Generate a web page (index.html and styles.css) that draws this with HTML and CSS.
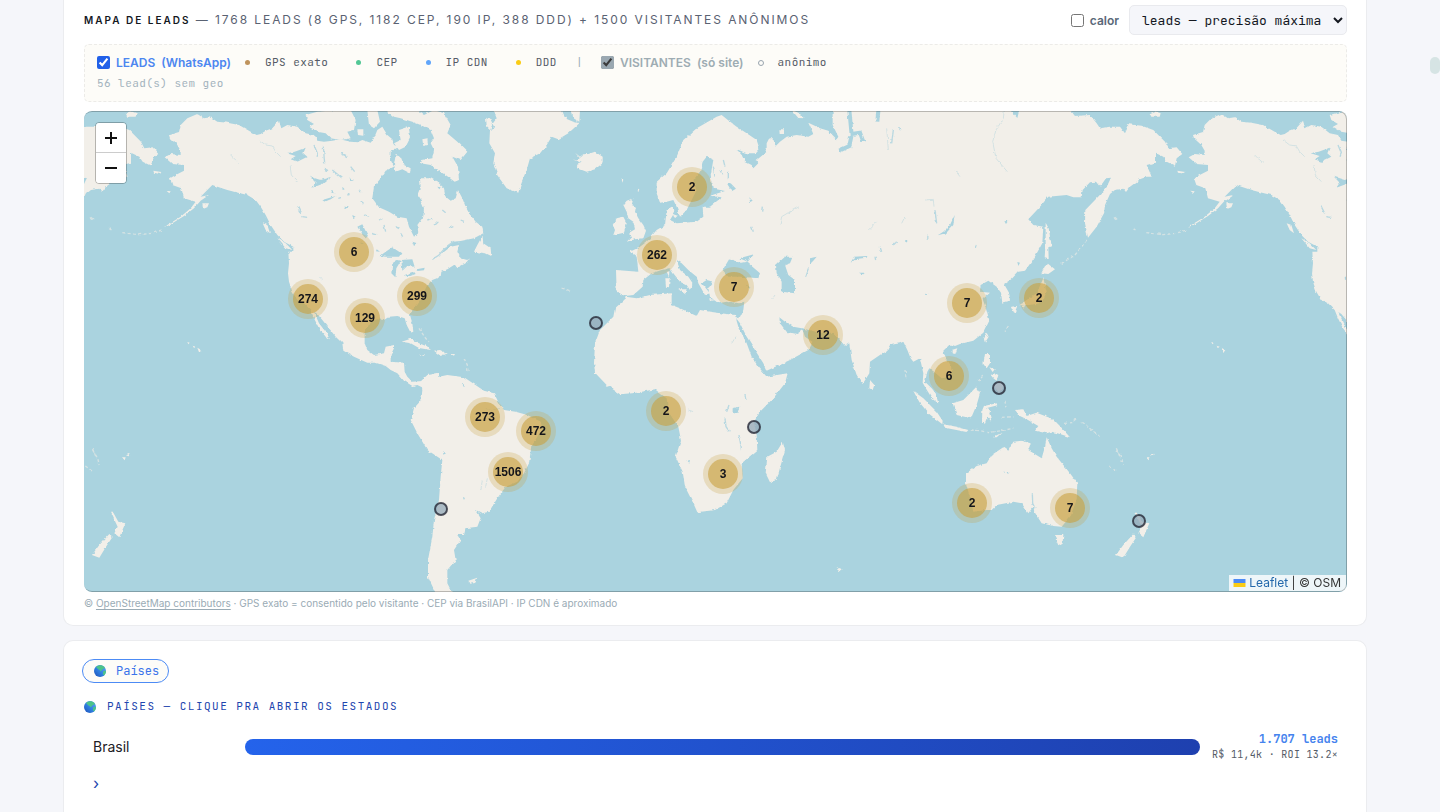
FILE: index.html
```html
<!DOCTYPE html>
<html lang="pt-BR">
<head>
<meta charset="utf-8">
<meta name="viewport" content="width=device-width, initial-scale=1">
<title>Mapa de leads</title>
<link rel="stylesheet" href="styles.css">
</head>
<body>
<main class="page">
  <section class="card card-map">
    <header class="map-head">
      <h2 class="map-title"><strong>MAPA DE LEADS</strong> — 1768 LEADS (8 GPS, 1182 CEP, 190 IP, 388 DDD) + 1500 VISITANTES ANÔNIMOS</h2>
      <div class="map-tools">
        <label class="heat"><input type="checkbox"> calor</label>
        <select class="mode" aria-label="Modo do mapa"><option>leads — precisão máxima</option></select>
      </div>
    </header>

    <div class="filters">
      <div class="filter-row">
        <label class="toggle toggle-leads"><input type="checkbox" checked> LEADS&nbsp; (WhatsApp)</label>
        <span class="key"><i class="dot dot-gps"></i>GPS exato</span>
        <span class="key"><i class="dot dot-cep"></i>CEP</span>
        <span class="key"><i class="dot dot-ip"></i>IP CDN</span>
        <span class="key"><i class="dot dot-ddd"></i>DDD</span>
        <span class="divider">|</span>
        <label class="toggle toggle-visitors"><input type="checkbox" checked> VISITANTES&nbsp; (só site)</label>
        <span class="key key-anon"><i class="ring"></i>anônimo</span>
      </div>
      <div class="no-geo">56 lead(s) sem geo</div>
    </div>

    <div class="map">
      <svg class="map-canvas" viewBox="0 0 1263 481" preserveAspectRatio="xMidYMid slice" role="img" aria-label="Mapa-múndi de leads">
        <defs>
          <filter id="coast" x="0" y="0" width="1263" height="481" filterUnits="userSpaceOnUse" color-interpolation-filters="sRGB">
            <feTurbulence type="fractalNoise" baseFrequency=".2" numOctaves="3" seed="4" result="n"/>
            <feDisplacementMap in="SourceGraphic" in2="n" scale="3" xChannelSelector="R" yChannelSelector="G"/>
          </filter>
          <g id="cluster"><circle class="halo" r="20"/><circle class="core" r="15"/></g>
          <circle id="pin" class="pin" r="6"/>
          <g id="world">
            <g transform="translate(0 -1) scale(.33333)">
              <g class="land">
                <path d="M255 75 285 66 290 45 310 25 340 12 360 25 380 22 400 35 430 38 465 45 500 65 518 75 530 72 545 62 565 55 585 32 592 55 610 45 640 50 665 70 690 75 700 92 720 95 745 92 770 88 800 95 820 97 835 90 860 98 870 85 880 60 895 50 910 75 925 88 930 105 945 110 920 125 920 150 930 170 905 182 890 205 870 230 865 265 885 292 915 305 940 320 968 325 975 350 990 380 1003 370 1000 345 1018 320 1020 295 1010 270 1000 255 1010 230 1008 205 1040 205 1060 215 1080 235 1085 260 1100 272 1115 265 1122 240 1135 265 1145 290 1155 310 1175 335 1195 350 1198 370 1170 385 1130 393 1105 395 1080 415 1075 430 1100 410 1125 405 1120 425 1130 445 1150 450 1160 440 1145 460 1118 475 1110 465 1090 478 1072 485 1070 500 1045 510 1030 525 1020 545 1010 570 1000 585 985 600 978 615 985 640 988 665 980 668 968 645 962 625 940 618 915 620 900 630 880 628 860 635 842 665 842 700 850 720 870 735 900 730 905 710 930 705 930 715 920 735 920 755 960 758 962 785 970 800 985 815 1015 813 1020 835 1000 825 985 828 960 812 940 790 920 780 905 768 875 758 850 758 810 740 778 722 775 700 755 680 735 655 715 630 700 612 690 605 705 640 725 665 738 688 725 680 705 655 690 625 680 600 660 580 640 570 625 545 615 515 612 490 615 460 613 425 628 425 628 410 600 395 580 375 560 345 545 315 530 290 515 270 490 255 450 245 430 240 400 230 385 225 370 240 350 260 375 255 350 272 330 295 300 318 265 340 240 355 250 345 290 320 320 295 335 275 300 265 292 235 265 225 258 205 275 195 300 182 300 165 265 162 242 142 260 132 290 135 290 122 280 105 258 85Z"/>
                <path d="M665 15 700 5 755 0 800 0 815 30 810 60 790 65 800 85 770 90 740 85 725 70 700 65 675 50 690 42 670 30ZM850 0 880 0 888 35 870 55 855 45ZM820 58 838 58 838 77 822 75Z"/>
                <path d="M905 0 1000 0 1020 15 1050 0 1080 10 1100 45 1090 70 1120 95 1150 125 1130 150 1105 140 1122 170 1125 210 1112 215 1085 195 1060 180 1040 165 1010 160 1015 150 1045 145 1050 120 1040 100 1050 85 1040 60 1010 45 985 35 950 25 930 20ZM935 135 950 140 960 165 980 175 978 190 955 178 935 185 930 165ZM945 60 975 50 978 85 965 110 945 120 930 100 950 90ZM1015 88 1030 85 1032 105 1018 108Z"/>
                <path d="M1195 378 1198 400 1220 415 1222 438 1205 430 1170 425 1180 405ZM580 385 605 400 625 420 605 415ZM536 340 550 345 558 370 545 360ZM355 280 375 280 370 292 357 297ZM125 10 140 4 158 10 155 20 130 20ZM208 182 232 186 228 192 210 188ZM247 242 260 244 256 250Z"/>
                <path d="M953 695 980 686 1005 700 1035 712 1040 720 1005 714 980 700ZM1050 722 1068 720 1088 730 1070 738ZM1005 732 1022 732 1020 738ZM1100 732 1113 732 1110 737Z"/>
                <path d="M1012 812 1030 795 1065 788 1065 800 1090 795 1140 802 1160 815 1200 842 1230 850 1245 880 1260 900 1295 905 1330 915 1370 935 1375 955 1342 1010 1335 1060 1320 1090 1300 1115 1265 1130 1240 1165 1215 1205 1195 1210 1175 1200 1190 1225 1180 1250 1145 1255 1140 1275 1120 1275 1130 1290 1110 1320 1115 1350 1090 1380 1090 1420 1105 1450 1055 1450 1032 1400 1032 1350 1045 1280 1050 1230 1065 1170 1070 1100 1075 1050 1030 1020 1000 970 980 930 990 895 1012 870 1015 840Z"/>
                <path d="M1153 1412 1180 1403 1174 1415 1158 1418ZM340 713 352 720 346 729ZM326 707 335 710 330 714ZM310 696 317 698 313 703ZM114 1042 125 1042 122 1051ZM126 1036 137 1031 134 1039Z"/>
              </g>
              <g class="isles"><path d="M18 322 24 330M75 355 85 362M115 368 165 374 205 370 240 358M1005 655 1015 670 1025 685 1035 695M1140 745 1150 765 1152 785M25 1015 38 1045"/></g>
              <g class="water">
                <path d="M888 438 905 425 925 412 952 430 945 440 905 440ZM925 460 940 450 950 453 937 475 934 502 922 490ZM952 450 985 448 992 470 970 468 955 482ZM960 496 990 485 995 492 970 501ZM998 478 1022 473 1020 481 1000 483ZM820 350 835 343 852 378 845 385 832 370ZM608 130 632 125 665 113 658 130 670 140 640 155 620 148 635 138ZM678 200 710 210 742 200 715 222 685 233 695 218ZM715 270 755 258 740 268 722 275ZM1060 230 1070 232 1066 238ZM745 240 752 250 742 248ZM800 205 810 210 802 214ZM780 290 795 292 785 298ZM805 315 815 320 807 324ZM775 230 782 238 776 240ZM985 395 1000 400 990 408ZM878 418 888 425 876 424ZM710 500 716 508 711 510ZM1136 824 1140 822 1140 832ZM1077 1024 1086 1030 1078 1034ZM1137 1163 1143 1163 1140 1170Z"/>
                <path class="stream" d="M1110 394 1085 412 1065 435 1045 448M690 105 700 130 696 140M718 110 722 160M745 180 775 205M840 315 855 322M865 370 880 375M900 345 905 365M1030 330 1045 325M1050 345 1060 335M640 290 650 310M655 320 670 322M770 130 790 140M800 170 812 185M830 395 838 400M720 175 732 182M760 265 770 262M825 240 832 246M830 275 838 282M790 255 800 252M1075 300 1085 308M1095 355 1108 350M1130 330 1140 334M885 330 895 326M935 350 945 356M950 370 956 380"/>
                <path class="river" d="M525 90 545 105 565 108 575 125 590 140M618 165 622 195 640 215M440 135 455 150 468 160M1245 895 1225 900 1205 895M1195 1115 1190 1140M1210 1105 1205 1130"/>
              </g>
            </g>
            <g transform="translate(396 -1) scale(.33333)">
              <g class="land">
                <path d="M40 0 50 25 35 45 30 60 28 100 45 130 40 160 55 200 80 235 115 248 125 215 140 180 150 145 180 130 200 105 215 80 235 88 265 70 298 40 280 35 262 28 252 15 245 0ZM18 20 30 25 42 50 35 62 20 48ZM275 0 300 0 298 35 280 25Z"/>
                <path d="M285 128 300 140 310 133 325 132 345 125 368 140 368 160 345 178 320 185 300 178 290 165 305 158 282 150 300 145ZM440 272 460 265 455 285 468 290 465 305 475 325 490 345 498 362 490 385 465 388 440 395 455 380 445 370 465 358 460 335 445 325 440 305 430 285ZM410 325 430 320 440 340 432 368 400 375 405 360 398 345ZM425 207 430 209 427 218ZM473 236 478 238 474 248Z"/>
                <path d="M710 20 725 15 750 35 770 50 800 70 830 90 838 115 825 130 800 130 770 118 785 135 795 155 815 165 820 175 835 160 830 150 860 125 860 100 870 80 885 95 885 110 900 95 920 80 950 75 985 80 1000 72 985 38 1020 55 1045 62 1070 88 1075 80 1058 45 1058 0 1590 0 1612 24 1618 0 1640 0 1770 0 1785 18 1830 15 1850 40 1860 55 1890 50 1920 50 1935 70 1945 48 1940 42 1985 47 2020 60 2055 95 2065 115 2090 112 2107 132 2090 145 2085 167 2060 155 2050 140 2025 128 2025 158 2000 165 2015 200 2000 200 1980 208 1950 230 1938 246 1930 236 1905 240 1890 252 1875 285 1872 310 1850 350 1824 383 1815 340 1816 300 1845 270 1878 235 1893 203 1878 205 1860 230 1848 215 1830 217 1808 240 1805 262 1780 262 1760 255 1705 260 1680 290 1645 328 1660 345 1690 350 1687 400 1662 445 1635 482 1615 485 1595 507 1572 522 1588 550 1590 572 1567 578 1563 548 1550 530 1525 512 1502 525 1500 545 1530 548 1508 568 1520 600 1528 632 1510 668 1480 692 1440 702 1425 708 1410 703 1390 722 1398 745 1418 775 1412 800 1385 805 1362 785 1348 775 1342 785 1335 815 1355 835 1367 850 1375 880 1358 868 1342 842 1328 818 1330 790 1320 745 1300 755 1292 745 1282 720 1270 695 1260 700 1230 705 1222 720 1170 755 1168 790 1148 822 1130 795 1115 750 1108 700 1095 708 1080 690 1060 668 1020 668 965 655 940 650 915 635 898 622 900 640 920 665 950 672 968 660 975 680 997 695 985 720 930 750 860 782 850 760 825 720 800 680 780 640 765 620 778 625 790 600 793 575 770 582 740 575 715 580 690 560 685 535 700 515 680 510 665 520 690 550 675 555 655 520 650 500 625 480 605 460 590 450 600 480 625 500 638 520 630 540 620 525 600 515 580 490 570 475 545 480 515 490 490 510 488 530 460 555 435 558 410 545 408 480 475 485 470 440 450 425 478 412 500 395 530 360 555 345 560 300 575 290 585 305 570 330 590 340 650 335 670 320 668 290 690 290 725 262 690 257 735 243 710 238 695 225 692 195 700 150 680 140 668 155 660 185 640 210 650 240 630 280 620 300 600 320 590 290 580 270 560 275 540 278 530 250 530 215 560 190 590 140 610 90 650 55Z"/>
                <path d="M437 560 470 565 510 555 575 550 575 585 600 595 650 618 660 600 690 605 740 612 765 615 775 650 800 700 815 740 835 770 860 800 923 790 915 820 880 865 840 905 822 935 830 975 832 1020 785 1060 788 1105 760 1140 740 1180 705 1200 652 1207 640 1180 615 1130 608 1085 587 1040 603 990 595 950 565 905 560 865 540 850 525 838 470 848 420 853 380 825 345 788 342 760 345 700 360 660 400 620 405 595 435 568ZM908 995 915 1020 890 1110 870 1117 857 1090 862 1040 890 1025Z"/>
                <path d="M595 538 620 538 615 552ZM556 505 569 505 567 532 558 530ZM560 485 568 484 567 500ZM688 567 708 570 690 573ZM578 312 595 318 585 328ZM935 0 955 8 975 25 955 24ZM898 58 912 58 912 72 899 72ZM1170 810 1183 825 1178 840 1168 835Z"/>
                <path d="M1697 338 1706 355 1715 408 1705 412 1706 445 1694 442 1697 400ZM1700 458 1725 478 1705 492 1684 490ZM1690 505 1700 545 1685 578 1650 585 1618 586 1640 570 1670 550ZM1594 590 1612 588 1603 610ZM1622 588 1636 585 1630 596ZM1520 668 1526 680 1515 698 1511 685ZM1415 720 1432 715 1426 732 1415 730Z"/>
                <path d="M1515 732 1530 732 1530 760 1520 775 1510 762ZM1528 772 1544 778 1538 786ZM1532 795 1545 790 1555 795 1550 812 1540 805ZM1540 830 1560 812 1572 830 1560 848 1545 838ZM1488 832 1500 850 1490 885 1473 925 1430 915 1418 880 1450 870ZM1300 843 1330 865 1370 905 1388 932 1387 943 1345 910 1318 876ZM1390 943 1430 950 1465 960 1460 966 1395 953ZM1507 900 1512 888 1550 880 1552 886 1518 895 1532 902 1528 910 1535 935 1522 920 1515 938 1506 935ZM1538 982 1565 968 1550 982Z"/>
                <path d="M1605 900 1630 898 1640 918 1670 908 1720 928 1742 950 1770 982 1740 972 1715 965 1700 970 1665 962 1675 948 1640 928 1620 918ZM1458 1090 1490 1068 1520 1060 1535 1035 1570 1012 1585 1022 1600 995 1625 992 1652 1000 1645 1020 1685 1045 1695 1010 1700 982 1715 1015 1730 1040 1770 1090 1792 1120 1790 1170 1770 1220 1745 1250 1720 1248 1685 1240 1663 1205 1660 1190 1645 1210 1625 1180 1600 1175 1550 1185 1535 1200 1520 1200 1480 1205 1475 1180 1458 1120ZM1722 1275 1750 1275 1748 1298 1735 1306Z"/>
                <path d="M1965 1208 1972 1208 1987 1235 2008 1240 1990 1282 1975 1270 1985 1250ZM1960 1272 1970 1280 1950 1310 1930 1343 1908 1335 1930 1305ZM1070 1372 1088 1378 1078 1386Z"/>
              </g>
              <g class="isles"><path d="M1752 940 1776 938 1788 926M1472 960 1500 962 1525 968 1565 962 1600 955M1888 1068 1912 1086M1910 1020 1925 1045 1930 1065M1805 935 1835 960 1865 982M1575 872 1578 895M1565 922 1600 920M1820 390 1805 410 1785 435 1745 460M1585 648 1575 665M1495 815 1508 795M1275 780 1278 805M245 534 270 542M1905 322 1915 332"/></g>
              <g class="water">
                <path d="M750 443 775 460 800 455 840 490 835 505 780 500 745 500 728 480ZM778 445 822 433 803 455ZM888 465 915 440 938 440 930 460 915 465 925 495 945 510 945 550 905 545 905 515 890 490ZM990 445 1010 440 1000 452 990 462ZM1424 315 1420 345 1398 370 1373 376 1390 365 1410 345ZM1112 458 1122 440 1162 438 1160 443 1128 447ZM1137 488 1155 488 1148 494ZM742 222 752 220 768 236 755 244ZM808 262 818 272 810 276ZM758 895 778 890 772 912 758 908ZM1570 1085 1574 1085 1574 1089ZM1583 1086 1588 1086 1586 1092ZM622 1052 630 1050 628 1058ZM1338 548 1345 550 1340 556ZM1275 390 1282 390 1280 398ZM1342 376 1346 380 1342 390ZM1485 408 1490 404 1488 414ZM1612 456 1620 458 1615 468ZM1573 334 1585 332 1578 342ZM788 128 806 150 800 155Z"/>
                <path class="gulf" d="M1108 0 1115 75 1108 108 1078 122M1115 72 1140 68 1150 95M1195 0 1192 35"/>
                <path class="stream" d="M735 925 738 950 748 964M777 975 785 1020M747 885 740 905M795 852 798 870M700 170 705 200M720 180 728 195M730 150 735 170M745 185 745 205M1657 1150 1658 1180 1665 1195M985 475 977 500M1185 440 1187 450M1200 410 1205 425M1250 395 1240 405M850 290 848 305M815 350 820 365M1365 300 1370 340M1240 60 1235 100M1255 55 1265 60M800 525 810 535"/>
                <path class="river" d="M1573 0 1570 25 1548 60 1538 95 1548 145 1582 185M1220 55 1225 120M1335 270 1360 268 1362 290M1425 180 1440 200M900 345 905 320 930 305 958 290M1265 340 1275 320M625 900 640 905M885 555 875 570M1165 360 1190 335M755 700 768 680"/>
              </g>
            </g>
          </g>
        </defs>
        <g filter="url(#coast)">
          <use href="#world"/>
          <use href="#world" x="-1024"/>
          <use href="#world" x="1024"/>
        </g>
        <g transform="translate(270 141)"><use href="#cluster"/><text class="count" y="4">6</text></g>
        <g transform="translate(224 188)"><use href="#cluster"/><text class="count" y="4">274</text></g>
        <g transform="translate(281 207)"><use href="#cluster"/><text class="count" y="4">129</text></g>
        <g transform="translate(333 185)"><use href="#cluster"/><text class="count" y="4">299</text></g>
        <g transform="translate(401 306)"><use href="#cluster"/><text class="count" y="4">273</text></g>
        <g transform="translate(452 320)"><use href="#cluster"/><text class="count" y="4">472</text></g>
        <g transform="translate(424 361)"><use href="#cluster"/><text class="count" y="4">1506</text></g>
        <g transform="translate(608 76)"><use href="#cluster"/><text class="count" y="4">2</text></g>
        <g transform="translate(573 144)"><use href="#cluster"/><text class="count" y="4">262</text></g>
        <g transform="translate(650 176)"><use href="#cluster"/><text class="count" y="4">7</text></g>
        <g transform="translate(739 224)"><use href="#cluster"/><text class="count" y="4">12</text></g>
        <g transform="translate(582 300)"><use href="#cluster"/><text class="count" y="4">2</text></g>
        <g transform="translate(639 363)"><use href="#cluster"/><text class="count" y="4">3</text></g>
        <g transform="translate(883 192)"><use href="#cluster"/><text class="count" y="4">7</text></g>
        <g transform="translate(955 187)"><use href="#cluster"/><text class="count" y="4">2</text></g>
        <g transform="translate(865 265)"><use href="#cluster"/><text class="count" y="4">6</text></g>
        <g transform="translate(888 392)"><use href="#cluster"/><text class="count" y="4">2</text></g>
        <g transform="translate(986 397)"><use href="#cluster"/><text class="count" y="4">7</text></g>
        <use href="#pin" x="512" y="212"/>
        <use href="#pin" x="670" y="316"/>
        <use href="#pin" x="915" y="277"/>
        <use href="#pin" x="357" y="398"/>
        <use href="#pin" x="1055" y="410"/>
      </svg>
      <div class="zoom">
        <button type="button" aria-label="Aproximar"><svg viewBox="0 0 14 14"><path d="M7 1v12M1 7h12"/></svg></button>
        <button type="button" aria-label="Afastar"><svg viewBox="0 0 14 14"><path d="M1 7h12"/></svg></button>
      </div>
      <div class="attribution">
        <svg class="flag" viewBox="0 0 12 8"><path fill="#4C8BF5" d="M0 0h12v4H0z"/><path fill="#FACC15" d="M0 4h12v4H0z"/></svg>
        <a href="#">Leaflet</a> | © OSM
      </div>
    </div>
    <p class="caption">© <a href="#">OpenStreetMap contributors</a> · GPS exato = consentido pelo visitante · CEP via BrasilAPI · IP CDN é aproximado</p>
  </section>

  <section class="card card-countries">
    <svg class="symbols" aria-hidden="true"><defs>
      <linearGradient id="sea" x1="1" y1="0" x2="0" y2="1"><stop offset="0" stop-color="#60a5fa"/><stop offset=".55" stop-color="#2f7fe0"/><stop offset="1" stop-color="#1d4fb8"/></linearGradient>
      <symbol id="globe" viewBox="0 0 12 12"><circle cx="6" cy="6" r="6" fill="url(#sea)"/><path fill="#4cc38a" d="M2 2C3.500 .6 5.500 0 7.500.3L10 1.600 11 3.200 9 4 7.800 5 7 6.500 5.500 5 4.500 4.500 3.500 3.500ZM9 6.500 11 5.500 12 6C12 8 11 9.600 10 10.400L8.800 9 9.200 7.800Z"/></symbol>
    </defs></svg>
    <button type="button" class="crumb"><svg class="globe"><use href="#globe"/></svg>Países</button>
    <h3 class="list-title"><svg class="globe"><use href="#globe"/></svg>PAÍSES — CLIQUE PRA ABRIR OS ESTADOS</h3>
    <div class="country">
      <span class="country-name">Brasil</span>
      <div class="bar"></div>
      <div class="stats"><b>1.707 leads</b><small>R$ 11,4k · ROI 13.2×</small></div>
      <span class="chevron">›</span>
    </div>
  </section>
</main>
<div class="scroll-thumb"></div>
</body>
</html>
```

FILE: styles.css
```css
* { box-sizing: border-box; }

:root {
  --mono: "JetBrains Mono", "DejaVu Sans Mono", monospace;
  --sans: Inter, "Liberation Sans", sans-serif;
}

body {
  margin: 0;
  background: #f5f6fa;
  color: #1c2230;
  font-family: var(--sans);
}

.page {
  display: flex;
  flex-direction: column;
  gap: 14px;
  min-height: 100vh;
  padding: 0 73px 0 63px;
}

.card {
  background: #fff;
  border: 1px solid #ebecef;
  border-radius: 10px;
}

.card-map {
  padding: 5px 19px 15px 20px;
  border-top: 0;
  border-radius: 0 0 10px 10px;
}

.map-head {
  display: flex;
  align-items: center;
  justify-content: space-between;
  margin-bottom: 9px;
}

.map-title {
  margin: 0;
  color: #5a6272;
  font-size: 12px;
  font-weight: 400;
  line-height: 16px;
  letter-spacing: .16em;
}

.map-title strong {
  color: #14181f;
  font-size: 10px;
  font-weight: 600;
  letter-spacing: .2em;
}

.map-tools { display: flex; align-items: center; gap: 10px; }

.heat {
  display: flex;
  align-items: center;
  gap: 6px;
  color: #5a6878;
  font-size: 12px;
  font-weight: 600;
}

input[type="checkbox"] { width: 13px; height: 13px; margin: 0; }

.mode {
  height: 30px;
  padding: 0 0 0 8px;
  width: 218px;
  border: 1px solid #e9eaee;
  border-radius: 5px;
  background: #f5f6fa;
  color: #14181f;
  font: 13px var(--mono);
}

.filters {
  margin-bottom: 9px;
  padding: 7px 12px;
  border: 1px dashed #ecebe8;
  border-radius: 5px;
  background: #fdfcf8;
  color: #555b66;
  font: 11px/21px var(--mono);
  letter-spacing: .04em;
}

.filter-row { display: flex; align-items: center; }

.toggle {
  display: flex;
  align-items: center;
  gap: 6px;
  font-family: var(--sans);
  font-size: 12px;
  font-weight: 600;
  letter-spacing: 0;
}

.toggle-leads { color: #4c86f0; }
.toggle-leads input { accent-color: #2160e8; }
.toggle-visitors { color: #9eacb3; }
.toggle-visitors input { accent-color: #9aa8b1; }

.key { display: flex; align-items: center; margin-left: 28px; }
.toggle + .key { margin-left: 14px; }
.dot { width: 5px; height: 5px; margin-right: 15px; border-radius: 50%; }
.dot-gps { background: #bf935c; }
.dot-cep { background: #52c795; }
.dot-ip { background: #60a5fa; }
.dot-ddd { background: #facc15; }
.ring { width: 6px; height: 6px; margin-right: 14px; border: 1px solid #98a4ae; border-radius: 50%; }
.divider { margin: 0 18px 0 19px; color: #9fb0bb; }
.no-geo { color: #a3b3bd; }

.map {
  position: relative;
  height: 481px;
  overflow: hidden;
  border-radius: 8px;
  background: #aad3df;
}
.map::after {
  content: "";
  position: absolute;
  inset: 0;
  border: 1px solid #0000003d;
  border-left-width: 0;
  border-radius: 8px;
  pointer-events: none;
}

.map-canvas { display: block; width: 100%; height: 100%; }
.land { fill: #f2efe9; }
.water { fill: #aad3df; }
.isles, .stream, .gulf, .river { fill: none; }
.isles { stroke: #d4e2e3; stroke-width: 4; stroke-dasharray: 9 7; }
.stream, .gulf { stroke: #b8d8e1; stroke-width: 4; }
.gulf { stroke: #aad3df; stroke-width: 12; }
.river { stroke: #d3e2e3; stroke-width: 3; }

.halo { fill: #c8a040; fill-opacity: .25; }
.core { fill: #c8a040; fill-opacity: .6; }
.count {
  fill: #14151a;
  font: bold 12px "Liberation Sans", sans-serif;
  text-anchor: middle;
}
.pin { fill: #94a9b8; fill-opacity: .75; stroke: #252836; stroke-opacity: .8; stroke-width: 2; }

.zoom {
  position: absolute;
  top: 11px;
  left: 11px;
  overflow: hidden;
  border: 1px solid #00000040;
  border-radius: 4px;
  background-clip: padding-box;
}
.zoom button {
  display: grid;
  place-items: center;
  width: 30px;
  height: 30px;
  padding: 0;
  border: 0;
  background: #fff;
}
.zoom button:first-child { border-bottom: 1px solid #ccc; }
.zoom svg { width: 14px; height: 14px; }
.zoom path { stroke: #111; stroke-width: 2; }

.attribution {
  position: absolute;
  right: 1px;
  bottom: 1px;
  padding: 0 5px 0 4px;
  background: #fffc;
  color: #333;
  font-size: 12px;
  line-height: 16px;
}
.attribution a { color: #2468ab; text-decoration: none; }
.flag { width: 13px; height: 8px; }

.caption {
  margin: 5px 0 0;
  color: #9aabb5;
  font-size: 10px;
  line-height: 13px;
}
.caption a { color: inherit; text-underline-offset: 2px; }

.card-countries {
  flex: 1;
  padding: 18px;
  border-bottom: 0;
  border-radius: 10px 10px 0 0;
}

.symbols { position: absolute; width: 0; height: 0; }
.globe { width: 12px; height: 12px; }

.crumb {
  display: flex;
  align-items: center;
  gap: 10px;
  height: 24px;
  padding: 0 9px 0 11px;
  border: 1px solid #4c8bf5;
  border-radius: 12px;
  background: #fdfcf8;
  color: #3b74ea;
  font: 12px var(--mono);
}

.list-title {
  display: flex;
  align-items: center;
  gap: 11px;
  margin: 15px 2px 0;
  color: #1e46ae;
  font: 11px/17px var(--mono);
  letter-spacing: .135em;
}

.country {
  display: grid;
  grid-template-columns: 140px 1fr auto;
  align-items: center;
  column-gap: 12px;
  row-gap: 12px;
  margin-top: 16px;
  padding: 0 10px 0 11px;
}
.country-name { color: #1c2026; font-size: 14px; }
.bar { height: 16px; border-radius: 8px; background: linear-gradient(90deg, #2463eb, #1e40af); }
.stats { display: flex; flex-direction: column; align-items: flex-end; font-family: var(--mono); }
.stats b { color: #4583ee; font-size: 12px; line-height: 16px; }
.stats small { color: #555b66; font-size: 10px; line-height: 15px; letter-spacing: .03em; }
.chevron { color: #1e46ae; font-size: 16px; line-height: 18px; }

.scroll-thumb {
  position: fixed;
  top: 57px;
  right: 0;
  width: 10px;
  height: 17px;
  border-radius: 5px;
  background: #d6e4e4;
}
```
